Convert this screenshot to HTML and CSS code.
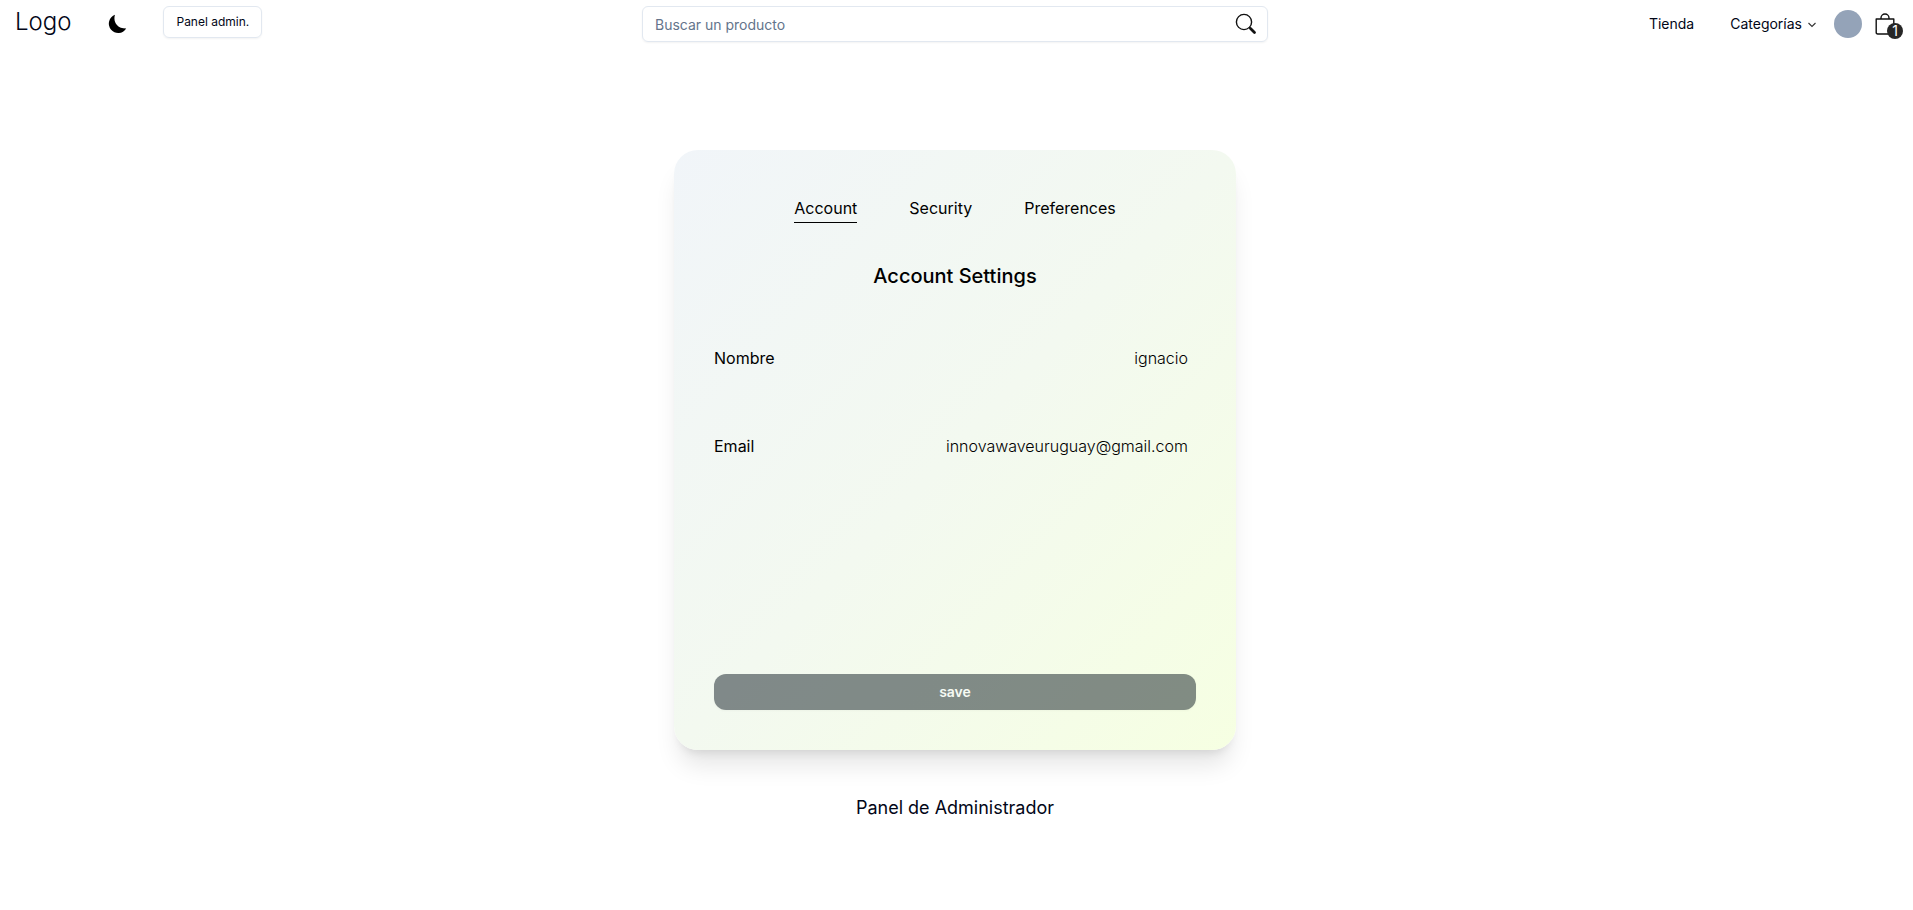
FILE: index.html
```html
<!DOCTYPE html>
<html lang="es">
<head>
<meta charset="utf-8">
<meta name="viewport" content="width=device-width, initial-scale=1">
<title>Account Settings</title>
<link rel="stylesheet" href="styles.css">
</head>
<body>
<header class="header">
  <div class="header-start">
    <a class="logo" href="#">Logo</a>
    <button class="theme-toggle" type="button" aria-label="Cambiar tema">
      <svg width="20" height="20" viewBox="0 0 20 20" aria-hidden="true"><path d="M8 .8C6 6.500 9 14.600 19.200 14.600A9.400 9.400 0 1 1 8 .8Z" fill="#000"/></svg>
    </button>
    <a class="admin-button" href="#">Panel admin.</a>
  </div>
  <form class="search" role="search">
    <input class="search-input" type="search" placeholder="Buscar un producto" aria-label="Buscar un producto">
    <button class="search-button" type="button" aria-label="Buscar">
      <svg width="22" height="22" viewBox="0 0 22 22" fill="none" stroke="#111" stroke-linecap="round" aria-hidden="true"><circle cx="9" cy="9" r="7.600" stroke-width="1.400"/><path d="M14.500 14.500l1 1" stroke-width="1.500"/><path d="M15.500 15.500l4 4" stroke-width="2.800"/></svg>
    </button>
  </form>
  <nav class="nav">
    <a class="nav-link" href="#">Tienda</a>
    <button class="nav-link nav-menu" type="button">Categorías
      <svg width="12" height="12" viewBox="0 0 12 12" fill="none" stroke="#333" stroke-width="1.100" aria-hidden="true"><path d="M2.500 5L6 8.500 9.500 5"/></svg>
    </button>
    <button class="avatar" type="button" aria-label="Cuenta"></button>
    <button class="cart" type="button" aria-label="Carrito">
      <svg width="20" height="22" viewBox="0 0 20 22" fill="none" stroke="#111" stroke-width="1.400" stroke-linejoin="round" aria-hidden="true"><path d="M1.200 6H18.800V19.500Q18.800 21 17.300 21H2.700Q1.200 21 1.200 19.500ZM6 6V5a4 4 0 0 1 8 0v1"/></svg>
      <span class="cart-count">1</span>
    </button>
  </nav>
</header>
<main class="main">
  <section class="card">
    <nav class="tabs">
      <a class="tab tab-active" href="#">Account</a>
      <a class="tab" href="#">Security</a>
      <a class="tab" href="#">Preferences</a>
    </nav>
    <h1 class="card-title">Account Settings</h1>
    <dl class="fields">
      <div class="field"><dt>Nombre</dt><dd>ignacio</dd></div>
      <div class="field"><dt>Email</dt><dd>innovawaveuruguay@gmail.com</dd></div>
    </dl>
    <button class="save" type="button" disabled>save</button>
  </section>
  <a class="admin-link" href="#">Panel de Administrador</a>
</main>
</body>
</html>
```
FILE: styles.css
```css
* { box-sizing: border-box; }

body {
  margin: 0;
  background: #fff;
  color: #020617;
  font-family: Inter, "Liberation Sans", sans-serif;
}

a { color: inherit; text-decoration: none; }

button {
  padding: 0;
  border: 0;
  background: none;
  color: inherit;
  font: inherit;
}

.header {
  display: grid;
  grid-template-columns: 1fr 33.3% 1fr;
  padding: 6px 18px 0 15px;
}

.header-start { display: flex; align-items: flex-start; }

.logo {
  font-size: 24px;
  font-weight: 300;
  line-height: 32px;
}

.theme-toggle { margin: 8px 36px 0; }
.theme-toggle svg { display: block; }

.admin-button {
  padding: 0 12px;
  border: 1px solid #e2e8f0;
  border-radius: 6px;
  box-shadow: 0 1px 2px rgb(0 0 0 / 5%);
  font-size: 12px;
  line-height: 30px;
}

.search {
  display: flex;
  align-items: center;
  height: 36px;
  padding: 0 10px 0 12px;
  border: 1px solid #e2e8f0;
  border-radius: 6px;
  box-shadow: 0 1px 2px rgb(0 0 0 / 5%);
}

.search-input {
  flex: 1;
  min-width: 0;
  padding: 2px 0 0;
  border: 0;
  outline: 0;
  background: none;
  font: inherit;
  font-size: 14px;
  line-height: 20px;
}

.search-input::placeholder { color: #64748b; }
.search-button svg { display: block; }

.nav {
  display: flex;
  align-items: center;
  justify-content: flex-end;
  height: 36px;
}

.nav-link {
  font-size: 14px;
  line-height: 20px;
}

.nav-menu {
  display: flex;
  align-items: center;
  gap: 4px;
  margin: 0 16px 0 36px;
}

.avatar {
  width: 28px;
  height: 28px;
  border-radius: 50%;
  background: #94a3b8;
}

.cart { position: relative; margin-left: 13px; }
.cart svg { display: block; }

.cart-count {
  position: absolute;
  right: -8px;
  bottom: -4px;
  width: 16px;
  height: 16px;
  border-radius: 50%;
  background: #262626;
  color: #fff;
  font-size: 14px;
  line-height: 16px;
  text-align: center;
}

.main {
  display: flex;
  flex-direction: column;
  align-items: center;
  padding: 108px 3px 0 0;
}

.card {
  display: flex;
  flex-direction: column;
  width: 90%;
  max-width: 562px;
  min-height: 600px;
  padding: 40px;
  border-radius: 24px;
  background: linear-gradient(to bottom right, #f1f5f9, #f3f9f0 50%, #f6ffe2);
  box-shadow: 0 20px 25px -5px rgb(0 0 0 / 10%), 0 8px 10px -6px rgb(0 0 0 / 10%);
  color: #000;
}

.tabs {
  display: flex;
  justify-content: center;
  gap: 52px;
  padding-top: 4px;
}

.tab {
  padding: 2px 0;
  border-bottom: 1px solid transparent;
  font-size: 16px;
  line-height: 24px;
}

.tab-active { border-color: #000; }

.card-title {
  margin: 39px 0 0;
  font-size: 20px;
  font-weight: 500;
  line-height: 28px;
  text-align: center;
}

.fields {
  display: grid;
  gap: 64px;
  margin: 56px 0 0;
  padding-right: 8px;
}

.field {
  display: flex;
  justify-content: space-between;
  font-size: 16px;
  line-height: 24px;
}

.field dd { margin: 0; font-weight: 300; }

.save {
  height: 36px;
  margin-top: auto;
  padding-bottom: 2px;
  border-radius: 12px;
  background: #0f1c24;
  box-shadow: 0 1px 2px rgb(0 0 0 / 5%);
  color: #f8fafc;
  font-size: 14px;
  font-weight: 600;
  opacity: 0.5;
}

.admin-link {
  margin-top: 44px;
  font-size: 18px;
  line-height: 28px;
}
```
